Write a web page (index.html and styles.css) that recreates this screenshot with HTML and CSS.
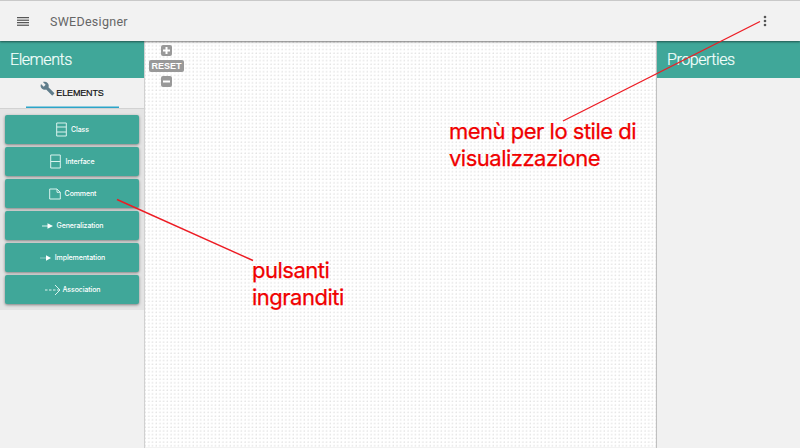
FILE: index.html
```html
<!DOCTYPE html>
<html lang="it">
<head>
<meta charset="utf-8">
<title>SWEDesigner</title>
<link rel="stylesheet" href="styles.css">
</head>
<body>
<div class="app">
  <header class="topbar">
    <svg class="menu-icon" width="12" height="9" viewBox="0 0 12 9"><path d="M0 .7h12M0 3.200h12M0 5.700h12M0 8.200h12"/></svg>
    <h1 class="brand">SWEDesigner</h1>
    <svg class="more-icon" width="4" height="12" viewBox="0 0 4 12"><circle cx="2" cy="2" r="1.300"/><circle cx="2" cy="6" r="1.300"/><circle cx="2" cy="10" r="1.300"/></svg>
  </header>
  <main class="workspace">
    <aside class="panel">
      <h2 class="panel-title">Elements</h2>
      <nav class="tabs">
        <a class="tab"><svg class="wrench" width="15" height="15" viewBox="0 0 24 24"><path d="M22.700 19l-9.100-9.100c.9-2.300.4-5-1.500-6.900-2-2-5-2.400-7.400-1.300L9 6 6 9 1.600 4.700C.4 7.100.9 10.100 2.900 12.100c1.900 1.900 4.600 2.400 6.900 1.500l9.100 9.100c.4.4 1 .4 1.400 0l2.300-2.300c.5-.4.5-1.100.1-1.400z"/></svg><span>ELEMENTS</span></a>
      </nav>
      <div class="buttons">
        <button class="item"><svg width="11" height="15" viewBox="0 0 11 15"><path d="M.7 1h9.600v13H.7zM.7 5h9.600M.7 10h9.600"/></svg><span>Class</span></button>
        <button class="item"><svg width="11" height="15" viewBox="0 0 11 15"><path d="M.7 1h9.600v13H.7zM.7 7.500h9.600"/></svg><span>Interface</span></button>
        <button class="item"><svg width="12" height="12" viewBox="0 0 12 12"><path d="M.7 1H8l3.300 3.300V11H.7zM8 1v3.300h3.300"/></svg><span>Comment</span></button>
        <button class="item"><svg width="11" height="8" viewBox="0 0 11 8"><path d="M0 4h6"/><path class="solid" d="M5.500 1.300L11 4 5.500 6.700z"/></svg><span>Generalization</span></button>
        <button class="item"><svg width="11" height="8" viewBox="0 0 11 8"><path class="thin" d="M0 4h6"/><path class="solid" d="M6 1.300L11 4 6 6.700z"/></svg><span>Implementation</span></button>
        <button class="item association"><svg width="16" height="12" viewBox="0 0 16 12"><path stroke-dasharray="2.500 1.500" d="M0 6h15"/><path d="M10 1l5 5-5 5"/></svg><span>Association</span></button>
      </div>
    </aside>
    <section class="canvas">
      <div class="zoom">
        <button class="zoom-key"><svg width="7" height="7" viewBox="0 0 7 7"><path d="M0 3.500h7M3.500 0v7"/></svg></button>
        <button class="zoom-key reset">RESET</button>
        <button class="zoom-key"><svg width="7" height="7" viewBox="0 0 7 7"><path d="M0 3.500h7"/></svg></button>
      </div>
    </section>
    <aside class="panel">
      <h2 class="panel-title">Properties</h2>
    </aside>
  </main>
  <svg class="pointers" width="800" height="448" viewBox="0 0 800 448"><path d="M760 21.500L563 121M117 199.500L253 260.500"/></svg>
  <p class="note note-style">menù per lo stile di<br>visualizzazione</p>
  <p class="note note-buttons">pulsanti<br>ingranditi</p>
</div>
</body>
</html>
```

FILE: styles.css
```css
* { box-sizing: border-box; }
body { margin: 0; font-family: Roboto, sans-serif; }
h1, h2, p { margin: 0; }
button { border: 0; padding: 0; color: #fff; }
svg { display: block; flex: none; }

.app { position: relative; width: 800px; height: 448px; overflow: hidden; display: flex; flex-direction: column; background: #f1f1f1; }

.topbar { position: relative; z-index: 1; flex: none; height: 41px; display: flex; align-items: center; padding: 0 33px 0 17px; background: #f2f2f2; border-top: 1px solid #c9c9c9; box-shadow: 0 1px 2px rgba(0,0,0,.5); }
.menu-icon path { stroke: #333; stroke-width: 1; }
.brand { margin-left: 21px; font-size: 12.500px; font-weight: 400; letter-spacing: .28px; color: #666; }
.more-icon { margin-left: auto; fill: #555; }

.workspace { flex: 1; min-height: 0; display: grid; grid-template-columns: 144px 513px 143px; }
.panel { background: #f1f1f1; }
.panel-title { height: 37px; padding-left: 10px; line-height: 37px; background: #40a799; color: #f3fffc; font-size: 16px; font-weight: 300; letter-spacing: -.45px; -webkit-text-stroke: .2px #f3fffc; }

.tabs { height: 31px; display: flex; justify-content: center; border-bottom: 1px solid #d2d2d2; }
.tab { width: 93px; height: 30px; display: flex; justify-content: center; padding-top: 3px; box-shadow: inset 0 -1.400px #2ca5c9; font: 9px/24px "Liberation Sans", sans-serif; color: #111; letter-spacing: -.15px; -webkit-text-stroke: .2px #111; }
.wrench { fill: #607d8b; margin-right: 1px; }

.buttons { display: flex; flex-direction: column; gap: 3px; padding: 6px 5px; height: 201px; background: #e4e4e4; }
.item { height: 29px; flex: none; display: flex; align-items: center; justify-content: center; gap: 4px; padding-left: 1px; border-radius: 2px; background: #40a799; box-shadow: 0 1px 3px rgba(0,0,0,.45); font: 500 7px Inter, sans-serif; letter-spacing: -.1px; }
.item svg { fill: none; stroke: #d9f3ee; stroke-width: 1; }
.item .solid { fill: #fff; stroke: none; }
.item .thin { stroke-width: .5; }
.association { gap: 2px; }

.canvas { background: radial-gradient(circle at 1px 1px, #d6d6d6 .45px, transparent .8px) 0 0 / 3.704px 3.704px #fff; box-shadow: inset 1px 0 1px #ccc, inset -1px 0 1px #bbb; }
.zoom { width: 36px; margin-left: 4.500px; padding-top: 4px; display: flex; flex-direction: column; align-items: center; gap: 4px; }
.zoom-key { width: 11px; height: 11px; display: grid; place-items: center; border-radius: 2px; background: #999; }
.zoom-key path { stroke: #fff; stroke-width: 2; }
.reset { width: 35px; height: 12px; font: bold 9px/12px "Liberation Sans", sans-serif; }

.pointers { position: absolute; inset: 0; z-index: 2; fill: none; stroke: #ed1c24; stroke-width: 1.400; }
.note { position: absolute; z-index: 2; font: 22px/27px Inter, sans-serif; letter-spacing: -.5px; color: #f00000; white-space: nowrap; -webkit-text-stroke: .25px #f00000; }
.note-style { left: 449px; top: 118px; }
.note-buttons { left: 252px; top: 257px; }
```
